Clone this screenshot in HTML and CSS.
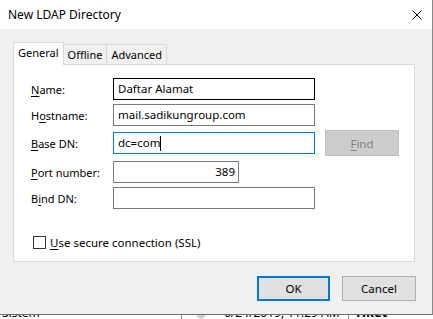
FILE: index.html
```html
<!DOCTYPE html>
<html lang="en">
<head>
  <meta charset="UTF-8" />
  <title>New LDAP Directory</title>
  <link rel="stylesheet" href="styles.css">
</head>

<body>
  <div class="dialog">
    <div class="titlebar">
      <span class="title">New LDAP Directory</span>
      <svg class="close" width="10" height="10" viewBox="0 0 10 10">
        <path d="M0.5 0.5 L9.5 9.5 M9.5 0.5 L0.5 9.5" stroke="#000" stroke-width="1" fill="none" />
      </svg>
    </div>

    <div class="content">
      <div class="tabs">
        <div class="tab active">General</div>
        <div class="tab">Offline</div>
        <div class="tab">Advanced</div>
      </div>

      <div class="panel">
        <div class="row">
          <label class="label"><u>N</u>ame:</label>
          <div class="field dark">Daftar Alamat</div>
        </div>
        <div class="row">
          <label class="label">H<u>o</u>stname:</label>
          <div class="field">mail.sadikungroup.com</div>
        </div>
        <div class="row tall">
          <label class="label"><u>B</u>ase DN:</label>
          <div class="field focus">dc=com<span class="caret"></span></div>
          <div class="find"><u>F</u>ind</div>
        </div>
        <div class="row">
          <label class="label"><u>P</u>ort number:</label>
          <div class="field port">389</div>
        </div>
        <div class="row">
          <label class="label">B<u>i</u>nd DN:</label>
          <div class="field"></div>
        </div>

        <div class="check-row">
          <span class="checkbox"></span>
          <span><u>U</u>se secure connection (SSL)</span>
        </div>
      </div>

      <div class="buttons">
        <div class="btn default">OK</div>
        <div class="btn">Cancel</div>
      </div>
    </div>
  </div>

  <!-- window behind the dialog -->
  <div class="behind">
    <span class="b-name">Sistem</span>
    <span class="b-sep"></span>
    <span class="b-dot"></span>
    <span class="b-date">6/24/2019, 11:29 AM</span>
    <span class="b-line"></span>
    <span class="b-subject">Tiket Masuk</span>
  </div>
</body>
</html>
```

FILE: styles.css
```css
body {
  margin: 0;
  padding: 0;
  width: 433px;
  height: 319px;
  overflow: hidden;
  background: #fff;
  font-family: "Noto Sans", sans-serif;
  font-size: 11px;
  color: #000;
}
u {
  text-decoration: underline;
  text-underline-offset: 2px;
}
.dialog {
  width: 432px;
  height: 314px;
  background: #f0f0f0;
  border-right: 1px solid #8a8a8a;
  border-bottom: 1px solid #6e6e6e;
}
.titlebar {
  height: 29px;
  background: #fff;
  display: flex;
  align-items: center;
  justify-content: space-between;
  padding: 0 10px 0 8px;
}
.title {
  font-size: 12px;
}
.close {
  display: block;
}
.content {
  padding: 13px 0 0 13px;
}
.tabs {
  display: flex;
  align-items: flex-end;
  height: 22px;
}
.tab {
  height: 20px;
  line-height: 19px;
  padding: 0 4px;
  background: #f0f0f0;
  border: 1px solid #d9d9d9;
  border-bottom: none;
  margin-left: -1px;
  box-sizing: border-box;
  font-size: 11px;
}
.tab.active {
  height: 23px;
  line-height: 20px;
  background: #fff;
  margin-left: 0;
  margin-bottom: -1px;
  position: relative;
  z-index: 1;
  padding: 0 4px;
}
.panel {
  width: 402px;
  height: 198px;
  box-sizing: border-box;
  background: #fff;
  border: 1px solid #d9d9d9;
  padding: 13px 0 0 17px;
  display: flex;
  flex-direction: column;
  gap: 4px;
}
.row {
  display: flex;
  align-items: center;
  height: 22px;
}
.row.tall {
  height: 26px;
  margin-bottom: 1px;
}
.label {
  width: 82px;
  flex-shrink: 0;
}
.field {
  width: 202px;
  height: 22px;
  box-sizing: border-box;
  border: 1px solid #7a7a7a;
  padding: 0 4px;
  line-height: 20px;
  font-size: 11.5px;
  display: flex;
  align-items: center;
}
.field.dark {
  border-color: #000;
}
.field.focus {
  border-color: #0078d7;
}
.field.port {
  width: 126px;
  justify-content: flex-end;
  padding-right: 3px;
}
.caret {
  display: inline-block;
  width: 0;
  height: 15px;
  border-left: 1px solid #000;
}
.find {
  width: 74px;
  height: 26px;
  box-sizing: border-box;
  margin-left: 10px;
  background: #cccccc;
  border: 1px solid #bfbfbf;
  color: #838383;
  font-size: 11.5px;
  display: flex;
  align-items: center;
  justify-content: center;
}
.check-row {
  display: flex;
  align-items: center;
  gap: 4px;
  margin-top: 22px;
  padding-left: 2px;
  font-size: 11.5px;
}
.checkbox {
  width: 13px;
  height: 13px;
  box-sizing: border-box;
  border: 1px solid #333;
  background: #fff;
}
.buttons {
  display: flex;
  justify-content: flex-end;
  gap: 12px;
  width: 403px;
  margin-top: 14px;
}
.btn {
  width: 74px;
  height: 25px;
  box-sizing: border-box;
  background: #e1e1e1;
  border: 1px solid #adadad;
  font-size: 11.5px;
  display: flex;
  align-items: center;
  justify-content: center;
}
.btn.default {
  width: 73px;
  border: 2px solid #0078d7;
}
.behind {
  height: 4px;
  overflow: hidden;
  display: flex;
  font-size: 12px;
  line-height: 13px;
}
.behind span {
  display: block;
  margin-top: -9px;
}
.b-name {
  margin-left: 2px;
  width: 181px;
}
.b-sep {
  width: 1px;
  height: 13px;
  background: #888;
}
.b-dot {
  width: 10px;
  height: 13px;
  margin-left: 14px;
  border-radius: 50%;
  background: #d0d0d0;
}
.b-date {
  margin-left: 18px;
  width: 125px;
}
.b-line {
  width: 1px;
  height: 13px;
  background: #888;
}
.b-subject {
  margin-left: 6px;
  font-weight: bold;
  font-size: 13px;
}
```
